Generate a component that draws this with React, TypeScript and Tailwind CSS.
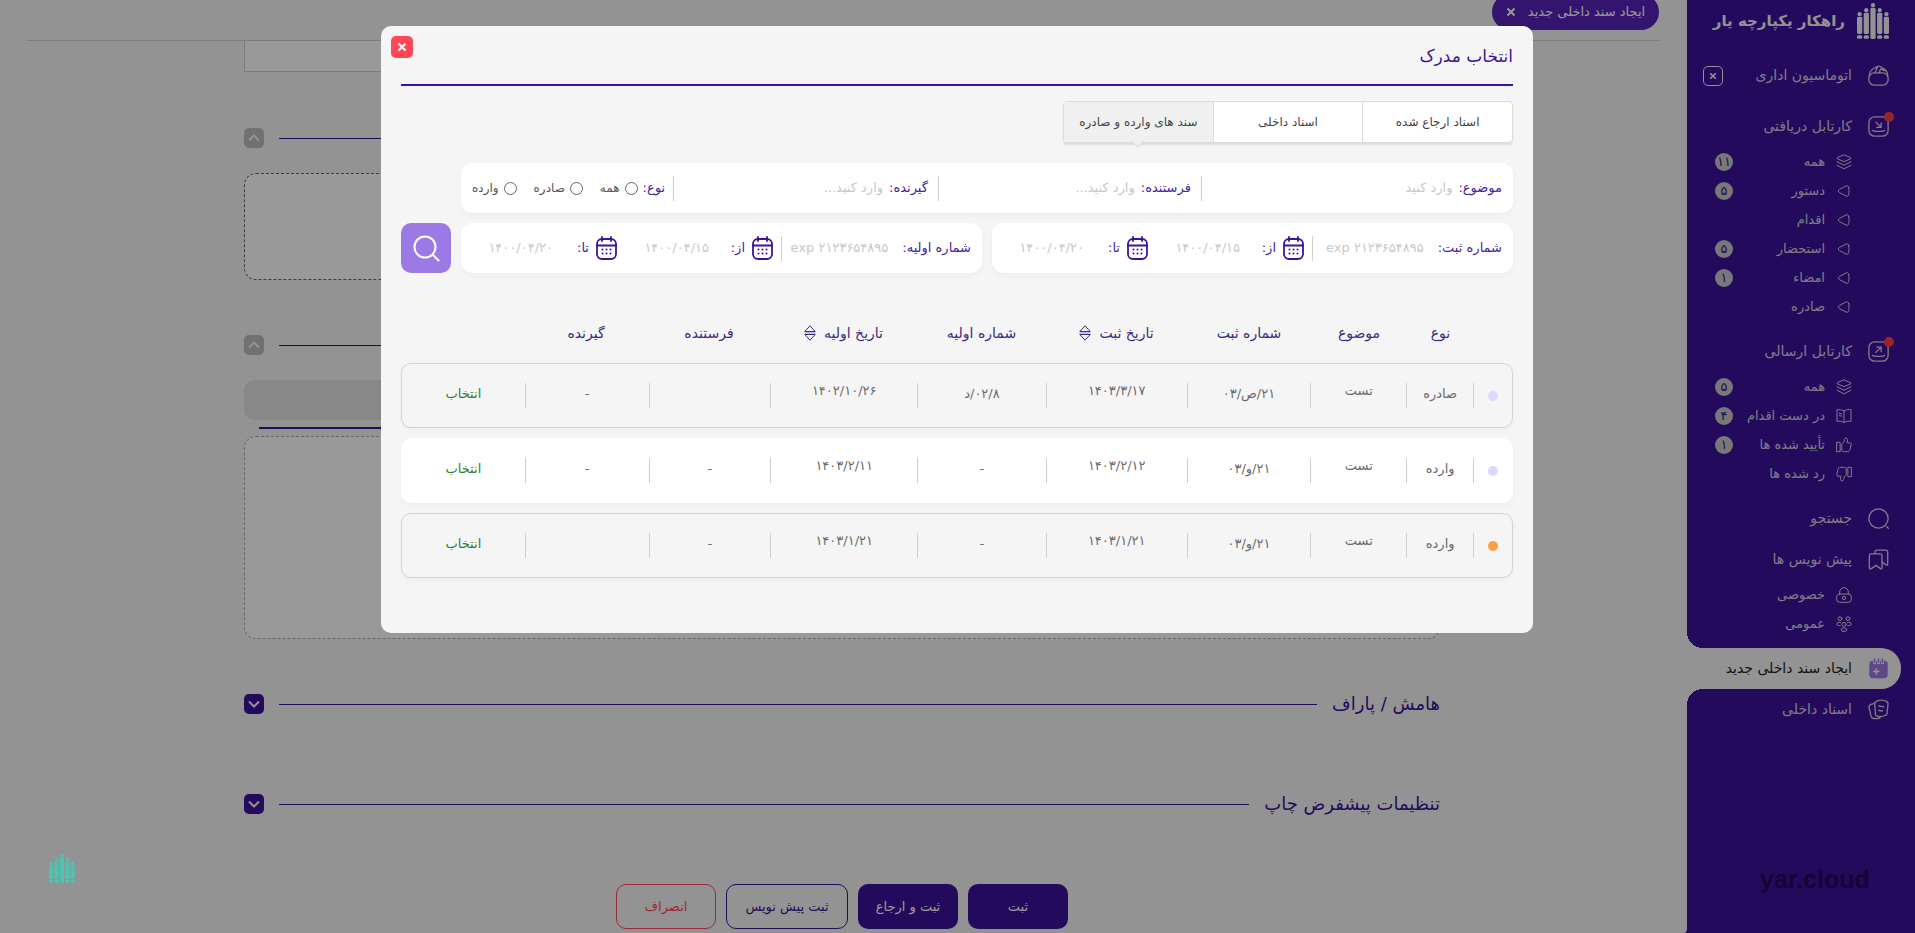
import { useState } from "react";
import type { ReactNode } from "react";
import clsx from "clsx";

type IconProps = { className?: string };

function Svg({ className, children, box = 24 }: { className?: string; children: ReactNode; box?: number }) {
  return (
    <svg
      viewBox={`0 0 ${box} ${box}`}
      fill="none"
      stroke="currentColor"
      strokeWidth="1.5"
      strokeLinecap="round"
      strokeLinejoin="round"
      aria-hidden="true"
      className={clsx("shrink-0", className)}
    >
      {children}
    </svg>
  );
}

function Logo({ className }: IconProps) {
  const bars = [
    { x: 0, top: 9 },
    { x: 6.7, top: 5 },
    { x: 13.4, top: 0 },
    { x: 20.1, top: 5 },
    { x: 26.8, top: 9 },
  ];
  return (
    <svg viewBox="0 0 32 36" fill="currentColor" aria-hidden="true" className={clsx("shrink-0", className)}>
      {bars.map((b, i) => (
        <g key={b.x}>
          <circle cx={b.x + 2.6} cy={b.top + 2.2} r="2.1" />
          <rect x={b.x} y={b.top + 4.8} width="5.2" height={(i === 2 ? 36 : 31) - b.top - 4.8} rx="1.4" />
          {i !== 2 && <rect x={b.x} y="32.2" width="5.2" height="3.6" rx="1.6" />}
        </g>
      ))}
    </svg>
  );
}

const BasketIcon = ({ className }: IconProps) => (
  <Svg className={className}>
    <rect x="1" y="9" width="22" height="14" rx="6" />
    <path d="M1.500 12.500C1.500 8.500 3.500 5.500 6.500 4L11 1.600c1-.5 2-.5 3 .1l5 3.300c2.300 1.700 3.500 4.200 3.500 7.500M8 9l3-7M12.500 9l2-4.500 4.500 2" />
  </Svg>
);
const InboxIcon = ({ className }: IconProps) => (
  <Svg className={className}>
    <rect x="1" y="1" width="22" height="22" rx="6.500" />
    <path d="M5 16.500c1 1.500 13 1.500 14 0M9 7l6 6M15 8v5h-5" />
  </Svg>
);
const OutboxIcon = ({ className }: IconProps) => (
  <Svg className={className}>
    <rect x="1" y="1" width="22" height="22" rx="6.500" />
    <path d="M5 16.500c1 1.500 13 1.500 14 0M9 13l6-6M10 7h5v5" />
  </Svg>
);
const LayersIcon = ({ className }: IconProps) => (
  <Svg className={className}>
    <path d="M12 1.500 22 5.500c.7.400.7 1.300 0 1.700L12 11.500 2 7.200c-.7-.4-.7-1.300 0-1.700zM1.500 11.500 12 16.800l10.500-5.300M1.500 16.800 12 22.300l10.500-5.500" />
  </Svg>
);
const TriangleIcon = ({ className }: IconProps) => (
  <Svg className={className}>
    <path d="M19 6.500c.8 3.700.8 7.300 0 11-.5 2.200-2 3-4 2L5.500 14.600C3 13.300 3 10.700 5.500 9.400L15 4.500c2-1 3.500-.2 4 2z" />
  </Svg>
);
const BookIcon = ({ className }: IconProps) => (
  <Svg className={className}>
    <path d="M12 4.500C9 2.500 5 2 1.500 2.500V20c3.500-.5 7.500 0 10.500 2 3-2 7-2.500 10.500-2V2.500C19 2 15 2.500 12 4.500zM12 4.500V22M5 8l3.500.7M5 11.500l3.500.7" />
  </Svg>
);
const ThumbIcon = ({ className }: IconProps) => (
  <Svg className={className}>
    <path d="M1.500 8h4.700v14H1.500zM9 10.500c2.500-1.500 3.500-4 3.700-7 .1-2.500 4-2.800 4.500 0 .3 2-.2 3.700-.8 5.200H21c1.500 0 2 1.300 1.700 2.500L21 19c-.5 2-1.500 3-3.500 3H13c-1.700 0-3-.4-4-1.300z" />
  </Svg>
);
const SearchIcon = ({ className }: IconProps) => (
  <Svg className={className}>
    <circle cx="12" cy="12" r="11" />
    <path d="m21.500 21.500 1.800 1.800" />
  </Svg>
);
const BookmarksIcon = ({ className }: IconProps) => (
  <Svg className={className}>
    <path d="M3.500 5.500H14c1.300 0 2 .8 2 2v14c0 1.200-.8 1.600-1.800.9L9 18.700l-5.200 3.700c-1 .7-2.300.3-2.300-.9v-14c0-1.200.8-2 2-2z" />
    <path d="M8 5.300V3.500c0-1.500.8-2.300 2.200-2.300h10c1.400 0 2.300.8 2.300 2.300V17c0 1.500-1.200 1.800-2.300 1L16.500 15" />
  </Svg>
);
const LockIcon = ({ className }: IconProps) => (
  <Svg className={className}>
    <path d="M5.500 10.500V7.500a6.500 6.500 0 0 1 13 0v3" />
    <rect x="1" y="10.500" width="22" height="12.500" rx="4.500" />
    <circle cx="12" cy="16.500" r="2.500" />
  </Svg>
);
const GroupIcon = ({ className }: IconProps) => (
  <Svg className={className}>
    <circle cx="6" cy="4" r="2.800" />
    <circle cx="18" cy="4" r="2.800" />
    <circle cx="12" cy="12.500" r="3" />
    <ellipse cx="12" cy="20.500" rx="4.200" ry="2.700" />
    <path d="M7 10C4 9 1 10 1 12s3 3 5.500 2.500M17 10c3-1 6 0 6 2s-3 3-5.500 2.500" />
  </Svg>
);
const PapersIcon = ({ className }: IconProps) => (
  <Svg className={className}>
    <path d="M10 2.500c4-2 8-1.500 11.500.5 1 .6 1.500 1.500 1.400 2.600l-1.200 11c-.1 1-.6 1.700-1.500 2-3.500 1.700-6.500 1.900-10 .9-1-.3-1.600-1-1.700-2l-.8-12c0-1.300 1-2.400 2.300-3zM7 5 3 6.500C1.500 7 1 8 1.200 9.500l2.300 10.300c.3 1.300 1 2 2.300 2.200 3 .7 5.500.7 8-.5M12.500 8l5.500 1M12 13l4.500.7" />
  </Svg>
);
const PlannerIcon = ({ className }: IconProps) => (
  <svg viewBox="0 0 24 24" aria-hidden="true" className={clsx("shrink-0", className)}>
    <path fill="#9c7ae5" d="M4 3h16c1.500.5 2.500 2 2.500 3.500V19c0 2.500-1.500 4-4 4h-13c-2.500 0-4-1.500-4-4V6.500C1.500 5 2.500 3.500 4 3z" />
    <path stroke="#f5f5f5" strokeWidth="3.500" strokeLinecap="round" d="M7.500 1.500v4M12 1.500v4M16.500 1.500v4" />
    <path stroke="#9c7ae5" strokeWidth="1.700" strokeLinecap="round" d="M7.500 1v4M12 1v4M16.500 1v4" />
    <path stroke="#f5f5f5" strokeWidth="1.700" strokeLinecap="round" d="M6.500 15.500h6M9.500 12.500v6" />
  </svg>
);
const CrossIcon = ({ className }: IconProps) => (
  <svg viewBox="0 0 10 10" stroke="currentColor" strokeWidth="2" aria-hidden="true" className={clsx("shrink-0", className)}>
    <path d="m1.500 1.500 7 7M8.500 1.500l-7 7" />
  </svg>
);
const CalendarIcon = ({ className }: IconProps) => (
  <svg viewBox="0 0 21 24" fill="none" stroke="currentColor" aria-hidden="true" className={clsx("shrink-0", className)}>
    <rect x="1" y="3" width="19" height="20" rx="5" strokeWidth="1.800" />
    <path d="M1 9.500h19M6 1v4M15 1v4" strokeWidth="1.800" strokeLinecap="round" />
    <path d="M6.500 13.500h8.500M6.500 17.500h8.500" strokeWidth="2" strokeLinecap="round" strokeDasharray="0 4" />
  </svg>
);
const SortIcon = ({ className }: IconProps) => (
  <svg viewBox="0 0 12 16" fill="none" stroke="currentColor" aria-hidden="true" className={clsx("shrink-0", className)}>
    <path d="M.8 6.500 6 .8l5.200 5.700zM.8 9.500 6 15.200l5.200-5.700z" />
    <path d="M.5 8h11" strokeOpacity=".5" />
  </svg>
);
const ChevronIcon = ({ className }: IconProps) => (
  <svg viewBox="0 0 12 8" fill="none" stroke="currentColor" strokeWidth="2" aria-hidden="true" className={className}>
    <path d="m1 1.500 5 5 5-5" />
  </svg>
);

type SubItem = { label: string; icon: (p: IconProps) => ReactNode; count?: string; flip?: boolean };

const received: SubItem[] = [
  { label: "همه", icon: LayersIcon, count: "۱۱" },
  { label: "دستور", icon: TriangleIcon, count: "۵" },
  { label: "اقدام", icon: TriangleIcon },
  { label: "استحضار", icon: TriangleIcon, count: "۵" },
  { label: "امضاء", icon: TriangleIcon, count: "۱" },
  { label: "صادره", icon: TriangleIcon },
];
const sent: SubItem[] = [
  { label: "همه", icon: LayersIcon, count: "۵" },
  { label: "در دست اقدام", icon: BookIcon, count: "۴" },
  { label: "تأیید شده ها", icon: ThumbIcon, count: "۱" },
  { label: "رد شده ها", icon: ThumbIcon, flip: true },
];
const drafts: SubItem[] = [
  { label: "خصوصی", icon: LockIcon },
  { label: "عمومی", icon: GroupIcon },
];

function NavItem({ label, icon: Icon, dot }: { label: string; icon: (p: IconProps) => ReactNode; dot?: boolean }) {
  return (
    <a href="#" className="flex h-[41px] items-center gap-4 ps-[26px] text-[14px]">
      <span className="relative">
        <Icon className="size-[21px]" />
        {dot && <span className="absolute start-0 -top-1 size-2.5 translate-x-1/2 rounded-full bg-[#ff4040]" />}
      </span>
      {label}
    </a>
  );
}

function SubList({ items }: { items: SubItem[] }) {
  return (
    <ul className="pb-2.5">
      {items.map(({ label, icon: Icon, count, flip }) => (
        <li key={label}>
          <a href="#" className="flex h-[29px] items-center gap-[11px] ps-[63px] pe-7 text-[13px]">
            <Icon className={clsx("size-4", flip && "rotate-180")} />
            <span className="whitespace-nowrap">{label}</span>
            {count && (
              <span className="ms-auto flex size-[18px] shrink-0 items-center justify-center rounded-full bg-[#c8c8c8] text-[13px] text-[#3d1299]">
                {count}
              </span>
            )}
          </a>
        </li>
      ))}
    </ul>
  );
}

function Sidebar() {
  return (
    <aside className="flex w-[228px] shrink-0 flex-col bg-[#3d1299] text-[#f5f5f5]">
      <div className="flex h-[55px] items-start gap-3 ps-[26px] pt-[3px]">
        <Logo className="h-9 w-8" />
        <span className="pt-1 text-[15px] leading-7 font-bold whitespace-nowrap">راهکار یکپارچه یار</span>
      </div>
      <div className="mb-2.5 flex items-center justify-between pe-4 text-[#d6d0e2]">
        <NavItem label="اتوماسیون اداری" icon={BasketIcon} />
        <button type="button" aria-label="بستن منو" className="flex size-5 items-center justify-center rounded-[5px] border border-[#f5f5f5] text-[#f5f5f5]">
          <CrossIcon className="size-2" />
        </button>
      </div>
      <nav className="text-[#d6d0e2]">
        <NavItem label="کارتابل دریافتی" icon={InboxIcon} dot />
        <SubList items={received} />
        <NavItem label="کارتابل ارسالی" icon={OutboxIcon} dot />
        <SubList items={sent} />
        <NavItem label="جستجو" icon={SearchIcon} />
        <NavItem label="پیش نویس ها" icon={BookmarksIcon} />
        <SubList items={drafts} />
        <div className="relative ms-3.5 rounded-s-[20px] bg-[#f5f5f5] text-[#222]">
          <span className="absolute end-0 -top-4 size-4 bg-[radial-gradient(circle_at_100%_0,#3d1299_16px,#f5f5f5_16px)]" />
          <span className="absolute end-0 -bottom-4 size-4 bg-[radial-gradient(circle_at_100%_100%,#3d1299_16px,#f5f5f5_16px)]" />
          <div className="-ms-3.5">
            <NavItem label="ایجاد سند داخلی جدید" icon={PlannerIcon} />
          </div>
        </div>
        <NavItem label="اسناد داخلی" icon={PapersIcon} />
      </nav>
      <p dir="ltr" className="mt-auto mb-10 ps-[73px] font-['Liberation_Sans',sans-serif] text-[25px] leading-7 font-bold text-[#220758]">
        yar.cloud
      </p>
    </aside>
  );
}

function SectionHead({ title, open }: { title?: string; open?: boolean }) {
  return (
    <div className="flex h-5 items-center gap-[15px] text-[#3d1299]">
      {title && <h2 className="text-[18px] leading-5 whitespace-nowrap">{title}</h2>}
      <div className="h-px grow bg-[#3d1299]" />
      <button
        type="button"
        aria-label={open ? "بستن بخش" : "باز کردن بخش"}
        className={clsx("flex size-5 items-center justify-center rounded-[5px] text-[#f5f5f5]", open ? "bg-[#bdbdbd]" : "bg-[#3d1299]")}
      >
        <ChevronIcon className={clsx("h-2 w-3", open && "rotate-180")} />
      </button>
    </div>
  );
}

function Page() {
  return (
    <main className="flex min-w-0 grow flex-col rounded-br-[4px] bg-[#f5f5f5]">
      <div className="ms-7 me-[27px] h-[41px] overflow-hidden border-b border-[#cfcfcf]">
        <div className="-mt-1.5 flex h-9 w-[167px] items-center justify-center gap-3 rounded-full bg-[#5522b8] text-[13px] whitespace-nowrap text-white">
          ایجاد سند داخلی جدید
          <button type="button" aria-label="بستن">
            <CrossIcon className="size-2.5" />
          </button>
        </div>
      </div>
      <div className="ps-[247px] pe-[244px]">
        <div className="h-[31px] border border-t-0 border-[#cfcfcf] bg-white" />
        <div className="mt-14">
          <SectionHead open />
        </div>
        <div className="mt-[25px] h-[107px] rounded-xl border border-dashed border-[#666] bg-white" />
        <div className="mt-[55px]">
          <SectionHead open />
        </div>
        <div className="mt-[25px] h-10 rounded-[10px] bg-[#e3e3e3]" />
        <div className="mx-[15px] mt-[7px] h-0.5 bg-[#3d1299]" />
        <div className="mt-[7px] h-[203px] rounded-xl border border-dashed border-[#aaa] bg-white" />
        <div className="mt-[55px]">
          <SectionHead title="هامش / پاراف" />
        </div>
        <div className="mt-20">
          <SectionHead title="تنظیمات پیشفرض چاپ" />
        </div>
        <div className="mt-[70px] flex justify-center gap-2.5 text-[13px] whitespace-nowrap">
          <button type="button" className="h-[45px] w-[100px] rounded-[10px] bg-[#3d1299] text-white">ثبت</button>
          <button type="button" className="h-[45px] w-[100px] rounded-[10px] bg-[#3d1299] text-white">ثبت و ارجاع</button>
          <button type="button" className="h-[45px] w-[122px] rounded-[10px] border border-[#3d1299] text-[#3d1299]">ثبت پیش نویس</button>
          <button type="button" className="h-[45px] w-[100px] rounded-[10px] border border-[#ff4757] text-[#ff4757]">انصراف</button>
        </div>
      </div>
    </main>
  );
}

function TextField({ id, label, placeholder, className }: { id: string; label: string; placeholder: string; className?: string }) {
  return (
    <div className={clsx("flex h-[25px] min-w-0 items-center", className)}>
      <label htmlFor={id} className="shrink-0 whitespace-nowrap text-[#45259c]">{label}</label>
      <input id={id} placeholder={placeholder} className="w-full min-w-0 outline-none placeholder:text-[#c8c8c8]" />
    </div>
  );
}

function DateField({ id, label, placeholder }: { id: string; label: string; placeholder: string }) {
  return (
    <div className="flex w-[156px] shrink-0 items-center">
      <CalendarIcon className="h-6 w-[21px] text-[#3d1299]" />
      <label htmlFor={id} className="ms-[7px] w-9 text-[#45259c]">{label}</label>
      <input id={id} placeholder={placeholder} className="w-20 outline-none placeholder:text-[#c8c8c8]" />
    </div>
  );
}

function NumberFilter({ id, label }: { id: string; label: string }) {
  return (
    <div className="flex h-[50px] min-w-0 flex-1 items-center rounded-xl bg-white ps-[11px] shadow-[0_3px_6px_rgba(0,0,0,0.03)]">
      <TextField id={id} label={label} placeholder="exp ۲۱۲۳۶۵۴۸۹۵" className="me-2 grow gap-3.5 border-e border-[#d0d0d0]" />
      <DateField id={`${id}-from`} label="از:" placeholder="۱۴۰۰/۰۴/۱۵" />
      <DateField id={`${id}-to`} label="تا:" placeholder="۱۴۰۰/۰۴/۲۰" />
    </div>
  );
}

const tabs = ["اسناد ارجاع شده", "اسناد داخلی", "سند های وارده و صادره"];
const kinds = ["همه", "صادره", "وارده"];

const columns = [
  { label: "نوع" },
  { label: "موضوع" },
  { label: "شماره ثبت" },
  { label: "تاریخ ثبت", sortable: true },
  { label: "شماره اولیه" },
  { label: "تاریخ اولیه", sortable: true },
  { label: "فرستنده" },
  { label: "گیرنده" },
];

const rows = [
  { unread: false, cells: ["صادره", "تست", "۲۱/ص/۰۳", "۱۴۰۳/۳/۱۷", "۰۲/۸/د", "۱۴۰۲/۱۰/۲۶", "", "-"] },
  { unread: false, cells: ["وارده", "تست", "۲۱/و/۰۳", "۱۴۰۳/۲/۱۲", "-", "۱۴۰۳/۲/۱۱", "-", "-"] },
  { unread: true, cells: ["وارده", "تست", "۲۱/و/۰۳", "۱۴۰۳/۱/۲۱", "-", "۱۴۰۳/۱/۲۱", "-", ""] },
];

// columns whose text sits a little above the row's middle
const raised = [1, 3, 5];

const rowGrid = "grid grid-cols-[39fr_67fr_96fr_124fr_141fr_129fr_147fr_122fr_124fr_123fr] items-center";

function DocumentPicker() {
  const [tab, setTab] = useState(2);

  return (
    <div
      role="dialog"
      aria-labelledby="picker-title"
      className="relative w-full max-w-[1152px] rounded-[10px] bg-[#f5f5f5] px-5 pt-3 pb-[55px] text-[13px]"
    >
      <button type="button" aria-label="بستن" className="absolute end-2.5 top-2.5 flex size-[22px] items-center justify-center rounded-[5px] bg-[#ff4757] text-white">
        <CrossIcon className="size-2.5" />
      </button>
      <h1 id="picker-title" className="h-[48px] border-b-2 border-[#3d1299] text-[17px] leading-9 text-[#3d1299]">انتخاب مدرک</h1>

      <div role="tablist" className="mt-[15px] flex h-[42px] w-[450px] rounded-[4px] border border-[#dcdcdc] bg-white shadow-[0_2px_2px_rgba(0,0,0,0.1)]">
        {tabs.map((label, i) => (
          <button
            key={label}
            type="button"
            role="tab"
            aria-selected={tab === i}
            onClick={() => setTab(i)}
            className={clsx(
              "relative flex-1 border-e border-[#dcdcdc] text-[12px] whitespace-nowrap text-[#444] last:border-e-0",
              tab === i && "bg-[#f0f0f0]"
            )}
          >
            {label}
            {tab === i && <span className="absolute -bottom-1 left-1/2 size-2 -translate-x-1/2 rotate-45 border-r border-b border-[#dcdcdc] bg-[#f0f0f0]" />}
          </button>
        ))}
      </div>

      <form className="mt-5 flex items-end gap-2.5" onSubmit={(e) => e.preventDefault()}>
        <div className="flex min-w-0 grow flex-col gap-2.5">
          <div className="flex h-[50px] items-center rounded-xl bg-white px-[11px] shadow-[0_3px_6px_rgba(0,0,0,0.03)]">
            <TextField id="subject" label="موضوع:" placeholder="وارد کنید" className="flex-[299] gap-1.5 border-e border-[#d0d0d0]" />
            <TextField id="sender" label="فرستنده:" placeholder="وارد کنید..." className="flex-[251] gap-1.5 border-e border-[#d0d0d0] ps-2.5" />
            <TextField id="receiver" label="گیرنده:" placeholder="وارد کنید..." className="flex-[253] gap-1.5 border-e border-[#d0d0d0] ps-2.5" />
            <fieldset className="flex shrink-0 items-center gap-[5px] ps-2">
              <legend className="float-start text-[#45259c]">نوع:</legend>
              {kinds.map((kind) => (
                <label key={kind} className="me-3 flex items-center gap-[5px] text-[12px] text-[#555] last:me-0">
                  <input type="radio" name="kind" value={kind} className="size-[13px] appearance-none rounded-full border border-[#666] checked:bg-[#3d1299]" />
                  {kind}
                </label>
              ))}
            </fieldset>
          </div>
          <div className="flex gap-2.5">
            <NumberFilter id="reg-number" label="شماره ثبت:" />
            <NumberFilter id="first-number" label="شماره اولیه:" />
          </div>
        </div>
        <button type="submit" aria-label="جستجو" className="flex size-[50px] shrink-0 items-center justify-center rounded-[10px] bg-[#9c7ae5] text-white">
          <Svg className="size-[27px]" box={27}>
            <circle cx="12" cy="12" r="10.500" strokeWidth="2" />
            <path d="m19.500 19.500 6 6" strokeWidth="2" />
          </Svg>
        </button>
      </form>

      <table className="mt-10 block w-full text-[#6b6b6b]">
        <thead className="block">
          <tr className={clsx(rowGrid, "h-10 text-[14px] text-[#3a2a80]")}>
            <td />
            {columns.map((col) => (
              <th key={col.label} scope="col" className="font-normal whitespace-nowrap">
                {col.sortable ? (
                  <button type="button" className="inline-flex items-center gap-2">
                    {col.label}
                    <SortIcon className="h-4 w-3" />
                  </button>
                ) : (
                  col.label
                )}
              </th>
            ))}
            <td />
          </tr>
        </thead>
        <tbody className="mt-2.5 flex flex-col gap-2.5">
          {rows.map((row, r) => (
            <tr
              key={r}
              className={clsx(
                rowGrid,
                "h-[65px] rounded-[10px] border shadow-[0_3px_6px_rgba(0,0,0,0.03)]",
                r % 2 ? "border-white bg-white" : "border-[#d3d3d3] bg-[#f5f5f5]"
              )}
            >
              <td className="flex h-[25px] items-center justify-center border-e border-[#cfcfcf]">
                <span className={clsx("size-2.5 rounded-full", row.unread ? "bg-[#ff9f43]" : "bg-[#e0d6ff]")} />
              </td>
              {row.cells.map((cell, i) => (
                <td key={i} className={clsx("h-[25px] border-e border-[#cfcfcf] text-center", raised.includes(i) ? "leading-4" : "leading-[22px]")}>
                  {cell}
                </td>
              ))}
              <td className="h-[25px] text-center leading-[22px]">
                <button type="button" className="text-[#2e7d32]">انتخاب</button>
              </td>
            </tr>
          ))}
        </tbody>
      </table>
    </div>
  );
}

export default function App() {
  return (
    <div dir="rtl" className="relative flex min-h-screen bg-[#3d1299] font-['DejaVu_Sans',sans-serif]">
      <Sidebar />
      <Page />
      <div className="fixed inset-0 flex items-start justify-center bg-black/40 pt-[26px] pr-px">
        <DocumentPicker />
      </div>
      <button type="button" aria-label="پشتیبانی" className="fixed bottom-[50px] left-[49px] text-[#4fc3b0]">
        <Logo className="h-[29px] w-[26px]" />
      </button>
    </div>
  );
}
